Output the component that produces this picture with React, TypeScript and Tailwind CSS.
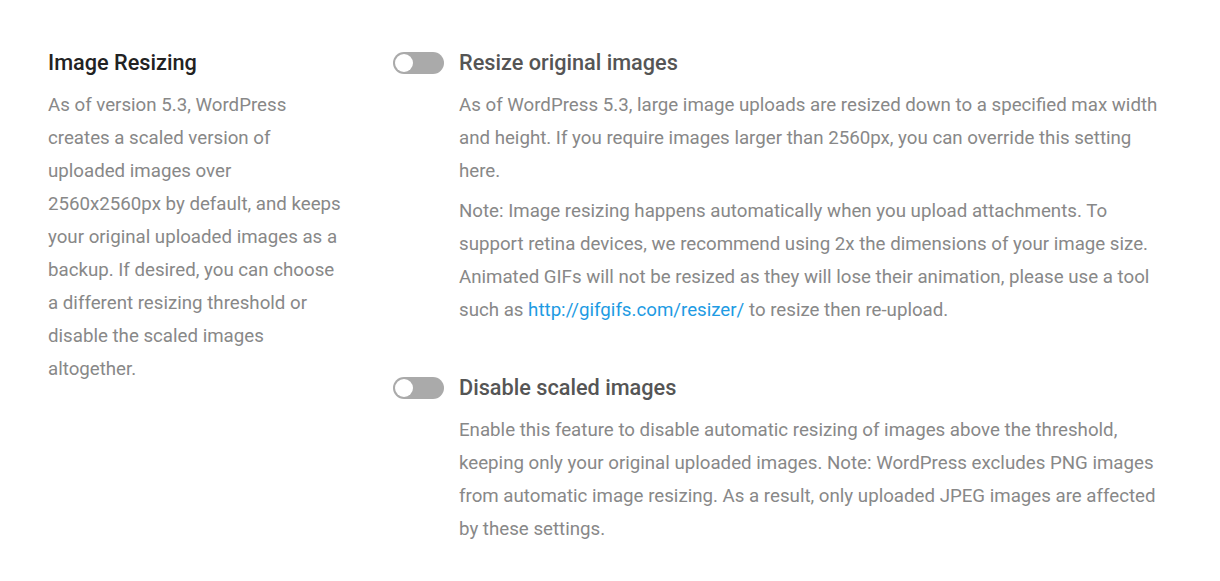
import React from "react";

function Toggle() {
  return (
    <div className="w-[51px] h-[22px] rounded-full bg-[#aaaaaa] p-[2px] shrink-0 mt-[10px]">
      <div className="w-[18px] h-[18px] rounded-full bg-white" />
    </div>
  );
}

function Setting({ title, children }: { title: string; children: React.ReactNode }) {
  return (
    <div className="flex gap-[15px]">
      <Toggle />
      <div className="w-[706px]">
        <h3 className="text-[21.7px] leading-[42px] font-medium text-[#555555]">{title}</h3>
        <div className="mt-[5px] space-y-[7px] text-[18.7px] leading-[33px] text-[#888888]">{children}</div>
      </div>
    </div>
  );
}

export default function App() {
  return (
    <div className="bg-white min-h-screen font-['Roboto',sans-serif] pt-[42px] pl-[48px]">
      <div className="flex">
        <div className="w-[300px]">
          <h2 className="text-[21.7px] leading-[42px] font-medium text-[#222222]">Image Resizing</h2>
          <p className="mt-[5px] text-[18.7px] leading-[33px] text-[#888888]">
            As of version 5.3, WordPress creates a scaled version of uploaded images over 2560x2560px by default, and
            keeps your original uploaded images as a backup. If desired, you can choose a different resizing threshold
            or disable the scaled images altogether.
          </p>
        </div>
        <div className="ml-[45px] space-y-[40px]">
          <Setting title="Resize original images">
            <p>
              As of WordPress 5.3, large image uploads are resized down to a specified max width and height. If you
              require images larger than 2560px, you can override this setting here.
            </p>
            <p>
              Note: Image resizing happens automatically when you upload attachments. To support retina devices, we
              recommend using 2x the dimensions of your image size. Animated GIFs will not be resized as they will lose
              their animation, please use a tool such as{" "}
              <a href="#" className="text-[#1e9be3]">
                http://gifgifs.com/resizer/
              </a>{" "}
              to resize then re-upload.
            </p>
          </Setting>
          <Setting title="Disable scaled images">
            <p>
              Enable this feature to disable automatic resizing of images above the threshold, keeping only your
              original uploaded images. Note: WordPress excludes PNG images from automatic image resizing. As a result,
              only uploaded JPEG images are affected by these settings.
            </p>
          </Setting>
        </div>
      </div>
    </div>
  );
}
